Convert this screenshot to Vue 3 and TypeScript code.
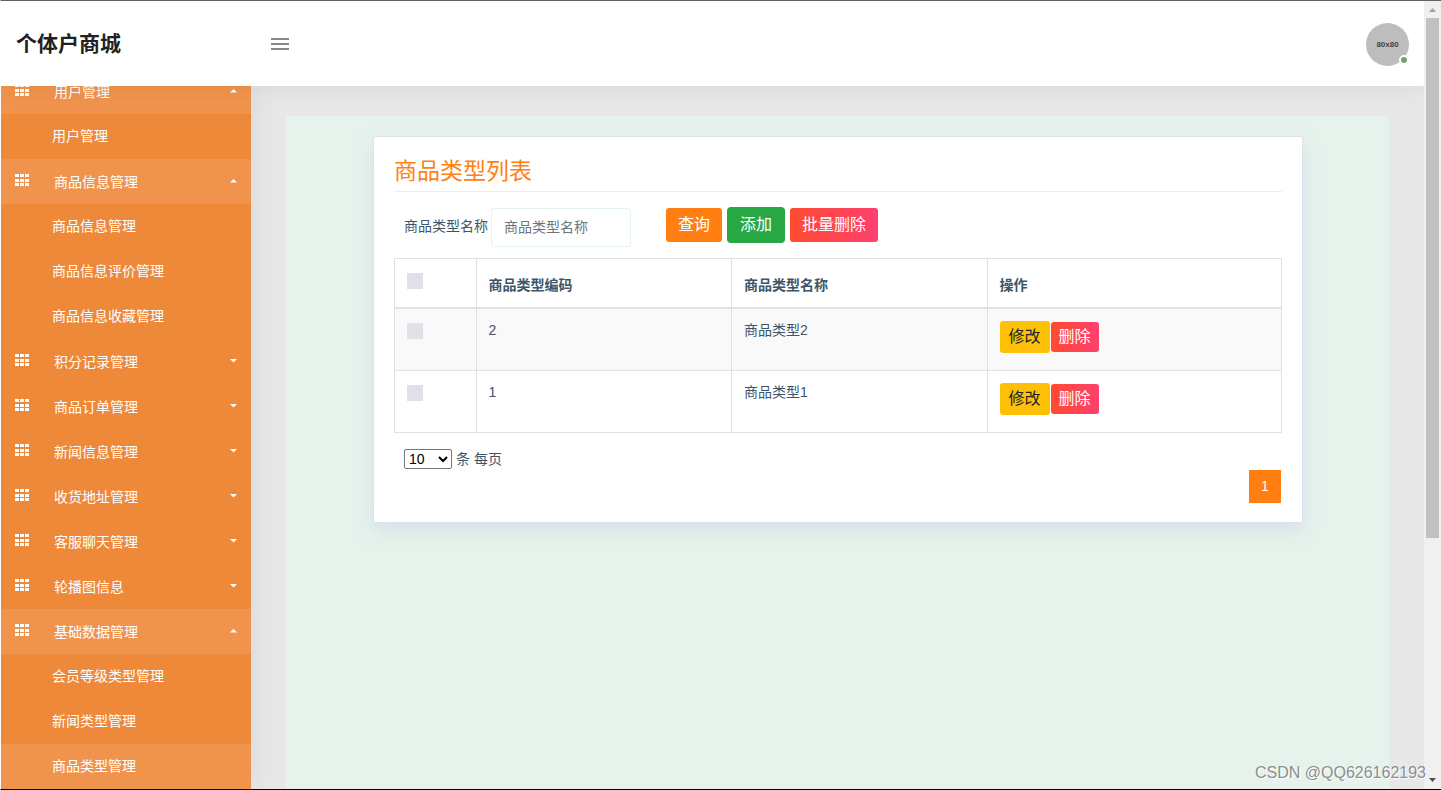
<script setup lang="ts">
import { computed, ref } from 'vue'

interface MenuGroup {
  title: string
  open: boolean
  children: string[]
}

interface GoodsType {
  code: number
  name: string
}

const groups = ref<MenuGroup[]>([
  { title: '用户管理', open: true, children: ['用户管理'] },
  { title: '商品信息管理', open: true, children: ['商品信息管理', '商品信息评价管理', '商品信息收藏管理'] },
  { title: '积分记录管理', open: false, children: [] },
  { title: '商品订单管理', open: false, children: [] },
  { title: '新闻信息管理', open: false, children: [] },
  { title: '收货地址管理', open: false, children: [] },
  { title: '客服聊天管理', open: false, children: [] },
  { title: '轮播图信息', open: false, children: [] },
  { title: '基础数据管理', open: true, children: ['会员等级类型管理', '新闻类型管理', '商品类型管理'] },
])

const current = ref('商品类型管理')
const keyword = ref('')
const pageSize = ref(10)
const selected = ref<number[]>([])
const rows = ref<GoodsType[]>([
  { code: 2, name: '商品类型2' },
  { code: 1, name: '商品类型1' },
])

const allSelected = computed({
  get: () => rows.value.length > 0 && selected.value.length === rows.value.length,
  set: (on: boolean) => {
    selected.value = on ? rows.value.map((r) => r.code) : []
  },
})
</script>

<template>
  <div class="window">
    <div class="page">
      <header class="topbar">
        <h1 class="brand">个体户商城</h1>
        <button class="burger" type="button" aria-label="菜单">
          <svg width="18" height="12" viewBox="0 0 18 12"><path d="M0 0h18v2H0zM0 5h18v2H0zM0 10h18v2H0z" fill="#868686" /></svg>
        </button>
        <div class="avatar">
          <span>80x80</span>
          <i class="status"></i>
        </div>
      </header>

      <div class="body">
        <nav class="sidebar">
          <div v-for="group in groups" :key="group.title" class="group">
            <button class="group-head" :class="{ open: group.open }" type="button" @click="group.open = !group.open">
              <svg class="grid-icon" width="14" height="12" viewBox="0 0 14 12">
                <path
                  d="M0 0h4v3H0zM5 0h4v3H5zM10 0h4v3h-4zM0 5h4v3H0zM5 5h4v3H5zM10 5h4v3h-4zM0 9h4v3H0zM5 9h4v3H5zM10 9h4v3h-4z"
                  fill="#fff"
                />
              </svg>
              <span class="group-title">{{ group.title }}</span>
              <svg class="caret" width="7" height="4" viewBox="0 0 7 4">
                <path :d="group.open ? 'M0 3.5 3.5 0 7 3.5z' : 'M0 0h7L3.5 3.5z'" fill="#fff" />
              </svg>
            </button>
            <template v-if="group.open">
              <a
                v-for="child in group.children"
                :key="child"
                class="sub"
                :class="{ active: child === current }"
                href="#"
                @click.prevent="current = child"
              >{{ child }}</a>
            </template>
          </div>
        </nav>

        <main class="main">
          <div class="canvas">
            <section class="card">
              <h2 class="card-title">商品类型列表</h2>
              <form class="search" @submit.prevent>
                <label for="type-name">商品类型名称</label>
                <input id="type-name" v-model="keyword" type="text" placeholder="商品类型名称" />
                <div class="actions">
                  <button class="btn primary" type="submit">查询</button>
                  <button class="btn success" type="button">添加</button>
                  <button class="btn danger" type="button">批量删除</button>
                </div>
              </form>

              <table class="table">
                <colgroup>
                  <col class="c-check" />
                  <col class="c-code" />
                  <col class="c-name" />
                  <col />
                </colgroup>
                <thead>
                  <tr>
                    <th><input v-model="allSelected" class="check" type="checkbox" aria-label="全选" /></th>
                    <th>商品类型编码</th>
                    <th>商品类型名称</th>
                    <th>操作</th>
                  </tr>
                </thead>
                <tbody>
                  <tr v-for="row in rows" :key="row.code">
                    <td><input v-model="selected" class="check" type="checkbox" :value="row.code" :aria-label="row.name" /></td>
                    <td>{{ row.code }}</td>
                    <td>{{ row.name }}</td>
                    <td>
                      <div class="ops">
                        <button class="btn small warning" type="button">修改</button>
                        <button class="btn small danger" type="button">删除</button>
                      </div>
                    </td>
                  </tr>
                </tbody>
              </table>

              <div class="page-size">
                <select id="page-size" v-model="pageSize">
                  <option :value="10">10</option>
                  <option :value="25">25</option>
                  <option :value="50">50</option>
                </select>
                <label for="page-size">条 每页</label>
              </div>
              <div class="pagination">
                <button class="page-no" type="button">1</button>
              </div>
            </section>
          </div>
        </main>
      </div>
    </div>

    <div class="scrollbar">
      <svg width="17" height="17" viewBox="0 0 17 17"><path d="M5 11h7L8.500 7z" fill="#a3a3a3" /></svg>
      <div class="track"><div class="thumb"></div></div>
      <svg width="17" height="17" viewBox="0 0 17 17"><path d="M5 6h7l-3.500 4z" fill="#505050" /></svg>
    </div>

    <div class="watermark">CSDN @QQ626162193</div>
  </div>
</template>

<style>
body {
  margin: 0;
}
</style>

<style scoped>
.window,
.window * {
  box-sizing: border-box;
}

.window {
  position: relative;
  display: flex;
  height: 100vh;
  overflow: hidden;
  border-top: 1px solid #626066;
  border-bottom: 1px solid #000;
  border-left: 1px solid #fff;
  background: #fff;
  color: #3e5569;
  font-family: 'Liberation Sans', 'Noto Sans CJK SC', sans-serif;
  font-size: 14px;
  line-height: 21px;
}

button,
input,
select {
  font-family: inherit;
}

button {
  cursor: pointer;
  border: 0;
}

.page {
  display: flex;
  flex: 1;
  flex-direction: column;
  min-width: 0;
}

.topbar {
  position: relative;
  z-index: 2;
  display: flex;
  flex: none;
  align-items: center;
  height: 85px;
  padding: 1px 15px 0;
  background: #fff;
  box-shadow: 0 0 30px rgba(0, 0, 0, 0.08);
}

.brand {
  width: 255px;
  margin: 0;
  color: #212121;
  font-size: 21px;
  font-weight: 700;
  line-height: 32px;
}

.burger {
  display: flex;
  padding: 0;
  background: none;
}

.avatar {
  position: relative;
  display: flex;
  align-items: center;
  justify-content: center;
  width: 43px;
  height: 43px;
  margin-left: auto;
  border-radius: 50%;
  background: #bdbdbd;
  color: #444;
  font-size: 8px;
  font-weight: 700;
}

.status {
  position: absolute;
  right: 0;
  bottom: 1px;
  width: 10px;
  height: 10px;
  border: 2px solid #fff;
  border-radius: 50%;
  background: #6aa964;
}

.body {
  display: flex;
  flex: 1;
  min-height: 0;
}

.sidebar {
  position: relative;
  z-index: 1;
  display: flex;
  flex: none;
  flex-direction: column;
  justify-content: flex-end;
  width: 250px;
  background: #ed8939;
  box-shadow: 0 0 30px rgba(0, 0, 0, 0.08);
}

.group {
  flex: none;
}

.group-head {
  display: flex;
  align-items: center;
  width: 100%;
  height: 45px;
  padding: 0 14px;
  background: none;
  color: #fff;
  font-size: 14px;
  text-align: left;
}

.group-head.open,
.sub.active {
  background: #f0944d;
}

.grid-icon {
  margin-bottom: 3px;
}

.group-title {
  flex: 1;
  padding: 2px 0 0 25px;
  line-height: 21px;
}

.caret {
  margin-bottom: 1px;
}

.sub {
  display: block;
  padding-left: 51px;
  color: #fff;
  line-height: 45px;
  text-decoration: none;
}

.main {
  flex: 1;
  min-width: 0;
  padding: 30px 35px 0;
  background: #e8e8e8;
}

.canvas {
  height: 100%;
  padding: 20px 86px 0 87px;
  background: #e6f3ec;
}

.card {
  padding: 17px 20px 19px;
  border: 1px solid #dee2ec;
  border-radius: 3px;
  background: #fff;
  box-shadow: 0 8px 18px rgba(200, 208, 228, 0.5);
}

.card-title {
  margin: 0 0 15px;
  padding-bottom: 2px;
  border-bottom: 1px solid #eceeef;
  color: #ff7f13;
  font-size: 23px;
  font-weight: 400;
  line-height: 35px;
}

.search {
  display: flex;
  align-items: center;
  padding-left: 10px;
}

.search label {
  padding-bottom: 2px;
}

.search input {
  width: 140px;
  height: 39px;
  margin: 1px 35px 0 3px;
  padding: 0 12px 2px;
  border: 1px solid #e3f3ee;
  border-radius: 3px;
  outline: 0;
  background: #fff;
  color: #3e5569;
  font-size: 14px;
}

.search input::placeholder {
  color: #6c757d;
  opacity: 1;
}

.actions {
  display: flex;
  align-items: center;
  gap: 5px;
  margin-bottom: 4px;
}

.btn {
  height: 34px;
  padding: 0 12px;
  border-radius: 3px;
  color: #fff;
  font-size: 16px;
  line-height: 24px;
}

.btn.primary {
  background: #ff7f13;
}

.btn.success {
  height: 36px;
  padding: 0 13px;
  border-radius: 4px;
  background: #28a745;
}

.btn.danger {
  background: linear-gradient(to right, #ff4b2f, #ff4070);
}

.btn.small {
  height: 30px;
  padding: 0 8px;
}

.btn.small.warning {
  height: 32px;
  padding: 0 9px;
  background: #ffc107;
  color: #212529;
}

.table {
  width: 100%;
  margin-top: 11px;
  border-collapse: collapse;
  table-layout: fixed;
}

.c-check {
  width: 9.2%;
}

.c-code,
.c-name {
  width: 28.8%;
}

.table th,
.table td {
  padding: 12px;
  border: 1px solid #dee2e6;
  text-align: left;
  vertical-align: top;
}

.table th {
  height: 49px;
  padding: 14px 12px 10px;
  border-bottom-width: 2px;
  font-weight: 700;
  line-height: 24px;
}

.table td {
  height: 62px;
  line-height: 18px;
}

.table tbody tr:nth-child(odd) {
  background: #f9f9f9;
}

.check {
  display: block;
  width: 16px;
  height: 16px;
  margin: 0;
  appearance: none;
  background: #dee2e6;
}

.table td .check {
  margin-top: 2px;
}

.check:checked {
  background: #ff7f13;
}

.ops {
  display: flex;
  align-items: center;
  gap: 1px;
}

.page-size {
  display: flex;
  align-items: center;
  gap: 4px;
  margin-top: 16px;
  padding-left: 10px;
}

.page-size select {
  width: 48px;
  height: 20px;
  border: 1px solid #767676;
  border-radius: 2px;
  background: #fff;
  color: #000;
  font-size: 14px;
}

.pagination {
  display: flex;
  justify-content: flex-end;
  padding-right: 1px;
}

.page-no {
  width: 32px;
  height: 33px;
  padding: 0;
  background: #ff7f13;
  color: #fff;
  font-size: 14px;
}

.scrollbar {
  position: relative;
  z-index: 3;
  display: flex;
  flex: none;
  flex-direction: column;
  width: 17px;
  background: #f0f0f0;
}

.track {
  flex: 1;
  padding: 0 2px;
}

.thumb {
  height: 69%;
  background: #c1c1c1;
}

.watermark {
  position: absolute;
  z-index: 4;
  right: 15px;
  bottom: 6px;
  color: #8b8f8d;
  font-size: 16px;
  text-shadow: 1px 1px 0 #fff;
}
</style>
